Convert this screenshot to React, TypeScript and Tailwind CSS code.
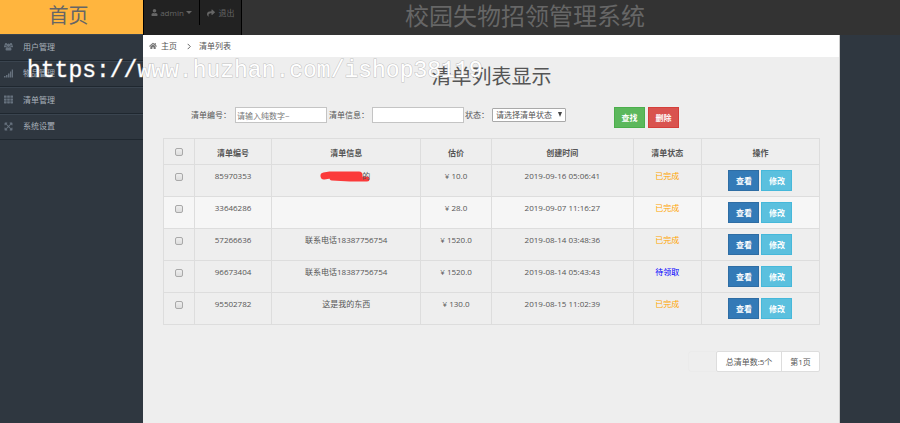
import React from 'react';
import { FaExpandArrowsAlt, FaHome, FaShare, FaTh, FaUser } from 'react-icons/fa';

interface Order {
  id: string;
  info: string;
  price: string;
  created: string;
  status: string;
  masked?: boolean;
}

const GroupIcon: React.FC<{ className?: string }> = ({ className }) => (
  <svg viewBox="0 0 18 16" className={className} fill="currentColor">
    <circle cx="4" cy="3.5" r="2.4" />
    <circle cx="14" cy="3.5" r="2.4" />
    <circle cx="9" cy="5.5" r="3.3" />
    <path d="M0 9.5V7.5q0-1.8 1.5-1.8 2.5 1 3.6.4Q5.3 7.8 6 8.5 4 8.5 3 9.5zM18 9.5V7.5q0-1.8-1.5-1.8-2.5 1-3.6.4-.2 1.7-.9 2.4 2 0 3 1z" />
    <path d="M3 14q0-5 3-5 3 2 6 0 3 0 3 5 0 2-2 2H5q-2 0-2-2z" />
  </svg>
);

const BarsIcon: React.FC<{ className?: string }> = ({ className }) => (
  <svg viewBox="0 0 18 16" className={className} fill="currentColor">
    <path d="M0 13h3v3H0zM4 11h3v5H4zM8 8h3v8H8zM12 4h2.5v12H12zM15.500 0H18v16h-2.500z" />
  </svg>
);

const menu = [
  { label: '用户管理', icon: GroupIcon },
  { label: '物品管理', icon: BarsIcon },
  { label: '清单管理', icon: FaTh },
  { label: '系统设置', icon: FaExpandArrowsAlt },
];

const orders: Order[] = [
  { id: '85970353', info: '的', price: '10.0', created: '2019-09-16 05:06:41', status: '已完成', masked: true },
  { id: '33646286', info: '', price: '28.0', created: '2019-09-07 11:16:27', status: '已完成' },
  { id: '57266636', info: '联系电话18387756754', price: '1520.0', created: '2019-08-14 03:48:36', status: '已完成' },
  { id: '96673404', info: '联系电话18387756754', price: '1520.0', created: '2019-08-14 05:43:43', status: '待领取' },
  { id: '95502782', info: '这是我的东西', price: '130.0', created: '2019-08-15 11:02:39', status: '已完成' },
];

const Sidebar: React.FC = () => (
  <aside className="w-[143px] shrink-0">
    <a href="#" className="flex h-[34px] items-center justify-center bg-[#ffb53e] pr-1.5 pb-0.5 text-xl text-[#666]">
      首页
    </a>
    <nav className="grid h-[106px] grid-rows-4">
      {menu.map(({ label, icon: Icon }) => (
        <a
          key={label}
          href="#"
          className="flex items-center gap-2.5 border-b border-[#1f272f] pl-1 text-[8px] text-[#a9b1ba] shadow-[inset_0_1px_0_#3a444f]"
        >
          <Icon className="size-[9px] text-[#66717d]" />
          {label}
        </a>
      ))}
    </nav>
  </aside>
);

const TopBar: React.FC = () => (
  <header className="flex h-[35px] bg-[#333]">
    <div className="flex w-[99px] border-x border-black bg-[#222] text-[8px] text-[#666]">
      <button className="flex h-[25px] w-14 items-center justify-center gap-0.5 border-r border-black">
        <FaUser className="size-[7px]" />
        admin
        <span className="border-x-[3px] border-t-[3px] border-x-transparent border-t-[#666]" />
      </button>
      <button className="flex h-[25px] grow items-center justify-center gap-1">
        <FaShare className="size-2" />
        退出
      </button>
    </div>
    <h1 className="grow pr-[92px] text-center text-2xl leading-[31px] text-[#666]">校园失物招领管理系统</h1>
  </header>
);

const SearchBar: React.FC = () => (
  <form className="flex items-start pl-7">
    <div className="flex items-center">
      <label htmlFor="orderId" className="w-[44px]">清单编号：</label>
      <input
        id="orderId"
        placeholder="请输入纯数字~"
        className="h-4 w-[92px] border border-[#c4c4c4] bg-white px-px placeholder:text-[#777]"
      />
      <label htmlFor="orderInfo" className="ml-0.5 w-[43px]">清单信息：</label>
      <input id="orderInfo" className="h-4 w-[92px] border border-[#c4c4c4] bg-white px-px" />
      <label htmlFor="status" className="ml-px w-[27px]">状态：</label>
      <span className="relative">
        <select
          id="status"
          className="block h-3.5 w-[74px] appearance-none rounded-[1px] border border-[#a9a9a9] bg-white pl-[3px]"
        >
          <option>请选择清单状态</option>
        </select>
        <span className="pointer-events-none absolute top-1 right-1 border-x-[2px] border-t-[5px] border-x-transparent border-t-[#444]" />
      </span>
    </div>
    <div className="ml-12 flex gap-[3px] font-bold text-white">
      <button type="button" className="h-[21px] w-[31px] border border-[#4cae4c] bg-[#5cb85c]">查找</button>
      <button type="button" className="h-[21px] w-[31px] border border-[#d43f3a] bg-[#d9534f]">删除</button>
    </div>
  </form>
);

const check =
  'block size-2 mx-auto appearance-none rounded-[2px] border border-[#a9a9a9] bg-linear-to-b from-[#eee] to-[#ddd]';

const OrderTable: React.FC = () => (
  <table className="mt-2.5 w-full table-fixed border-collapse text-center [&_td]:border [&_td]:border-[#ddd] [&_th]:border [&_th]:border-[#ddd]">
    <colgroup>
      <col className="w-[4.7%]" />
      <col className="w-[11.8%]" />
      <col className="w-[22.7%]" />
      <col className="w-[10.8%]" />
      <col className="w-[21.6%]" />
      <col className="w-[10.4%]" />
      <col className="w-[18%]" />
    </colgroup>
    <thead>
      <tr className="h-[26px]">
        <th><input type="checkbox" aria-label="全选" className={check} /></th>
        <th className="pt-0.5">清单编号</th>
        <th className="pt-0.5">清单信息</th>
        <th className="pt-0.5">估价</th>
        <th className="pt-0.5">创建时间</th>
        <th className="pt-0.5">清单状态</th>
        <th className="pt-0.5">操作</th>
      </tr>
    </thead>
    <tbody>
      {orders.map((order) => (
        <tr key={order.id} className="h-8 align-top leading-3 nth-2:bg-[#f6f6f6] [&>td]:pt-[5px]">
          <td><input type="checkbox" aria-label={order.id} className={`${check} mt-[3px]`} /></td>
          <td>{order.id}</td>
          <td>
            {order.masked ? (
              <span className="flex justify-center pr-0.5">
                <svg viewBox="0 0 50 12" className="-mr-2 h-3 w-[50px]" fill="none" stroke="#fb3a3a" strokeLinecap="round" strokeLinejoin="round">
                  <path d="M4 6 L10 5 L39 5" strokeWidth="7" />
                  <path d="M12 8 L30 9 L47 9" strokeWidth="5" />
                </svg>
                {order.info}
              </span>
            ) : (
              order.info
            )}
          </td>
          <td>¥ {order.price}</td>
          <td>{order.created}</td>
          <td className={order.status === '待领取' ? 'text-[#0000ff]' : 'text-[#ffa500]'}>{order.status}</td>
          <td>
            <div className="flex justify-center gap-0.5 font-bold text-white">
              <button className="h-[21px] w-[31px] border border-[#2e6da4] bg-[#337ab7]">查看</button>
              <button className="h-[21px] w-[31px] border border-[#46b8da] bg-[#5bc0de]">修改</button>
            </div>
          </td>
        </tr>
      ))}
    </tbody>
  </table>
);

export default function App() {
  return (
    <div className="relative flex min-h-screen bg-[#2f3740] font-['Open_Sans','Noto_Sans_CJK_SC',sans-serif]">
      <Sidebar />
      <div className="flex grow flex-col">
        <TopBar />
        <main className="mr-[60px] grow border-r border-[#ccc] bg-[#eee] text-[8px] text-[#555]">
          <div className="flex h-[22px] items-center bg-white pl-1.5">
            <FaHome className="mr-1 size-2 text-[#777]" />
            <a href="#">主页</a>
            <svg viewBox="0 0 4 8" className="mr-2 ml-2.5 h-[7px] w-1" fill="none" stroke="#555">
              <path d="M.5 1 L3.5 4 L.5 7" />
            </svg>
            <a href="#">清单列表</a>
          </div>
          <div className="pr-[19px] pl-5">
            <h2 className="pt-1 text-center text-xl leading-8 text-[#555]">清单列表显示</h2>
            <div className="pt-3.5">
              <SearchBar />
            </div>
            <OrderTable />
            <div className="mt-[26px] flex justify-end">
              <span className="w-7 rounded-l-sm border border-r-0 border-[#ebebeb]" />
              <div className="flex h-[21px] items-center rounded-xs border border-[#ddd] bg-white">
                <span className="w-16 text-center">总清单数:5个</span>
                <span className="flex h-full w-[38px] items-center justify-center border-l border-[#ddd]">第1页</span>
              </div>
            </div>
          </div>
        </main>
      </div>
      <div className="pointer-events-none absolute top-[55px] left-[27px] font-['Liberation_Mono',monospace] text-[23px] leading-8 whitespace-nowrap text-white [-webkit-text-stroke:1px_#aaaa] [paint-order:stroke_fill]">
        https://www.huzhan.com/ishop38119
      </div>
    </div>
  );
}
